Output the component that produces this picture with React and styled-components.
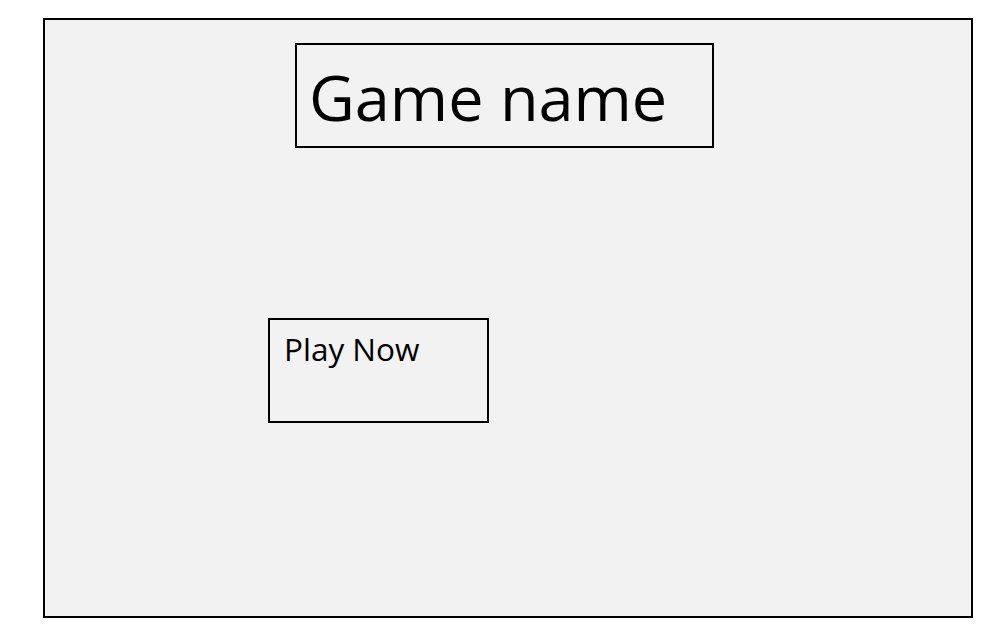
import React from "react";
import styled, { createGlobalStyle } from "styled-components";

const GlobalStyle = createGlobalStyle`
  html, body {
    margin: 0;
    padding: 0;
    background: #ffffff;
    font-family: "Open Sans", "Noto Sans", sans-serif;
  }
`;

const Page = styled.div`
  display: flex;
  padding: 18px 0 0 43px;
`;

const Screen = styled.div`
  box-sizing: border-box;
  width: 930px;
  height: 600px;
  border: 2px solid #000;
  background: #f2f2f2;
  display: flex;
  flex-direction: column;
  align-items: flex-start;
  padding-top: 23px;
`;

const TitleBox = styled.div`
  box-sizing: border-box;
  width: 419px;
  height: 105px;
  margin-left: 250px;
  border: 2px solid #000;
  padding: 20px 0 0 12px;
  font-size: 63px;
  line-height: 1;
  color: #000;
`;

const PlayButton = styled.button`
  box-sizing: border-box;
  width: 221px;
  height: 105px;
  margin: 170px 0 0 ${({ offset }) => offset}px;
  border: 2px solid #000;
  background: transparent;
  padding: 13px 0 0 14px;
  font-family: inherit;
  font-size: 31.5px;
  line-height: 1;
  color: #000;
  text-align: left;
  display: flex;
  align-items: flex-start;
  cursor: pointer;
`;

const App = () => {
  return (
    <>
      <GlobalStyle />
      <Page>
        <Screen>
          <TitleBox>Game name</TitleBox>
          <PlayButton offset={223}>Play Now</PlayButton>
        </Screen>
      </Page>
    </>
  );
};

export default App;
